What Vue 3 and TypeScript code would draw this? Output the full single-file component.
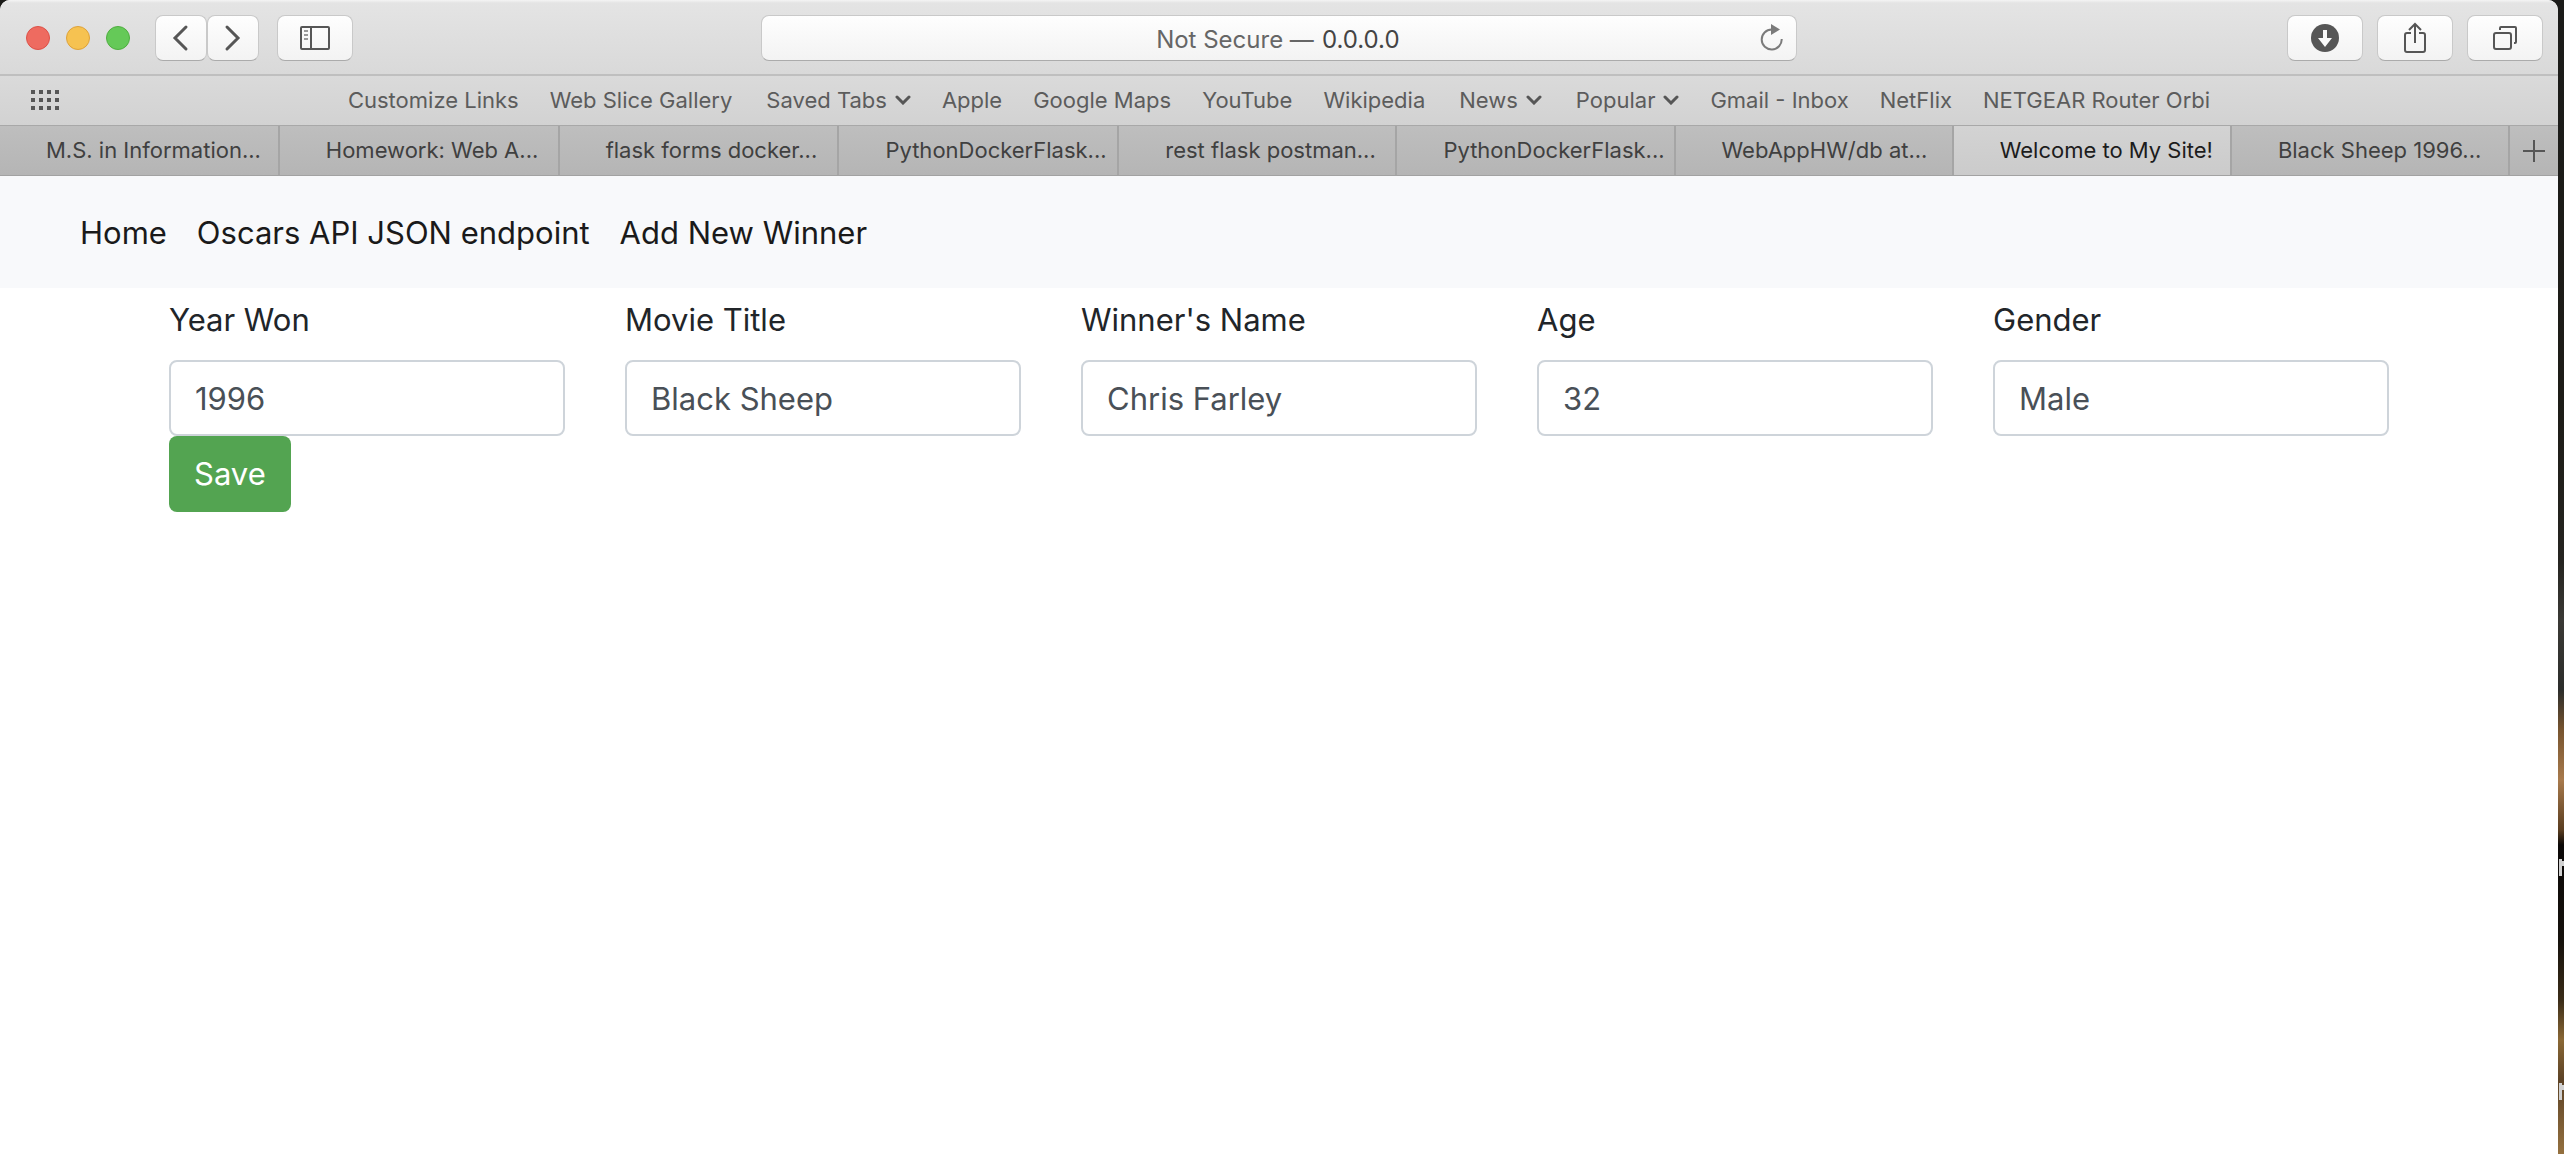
<script setup lang="ts">
import { reactive } from 'vue'

interface Bookmark {
  label: string
  menu?: boolean
}

interface Field {
  id: string
  label: string
  value: string
}

const bookmarks: Bookmark[] = [
  { label: 'Customize Links' },
  { label: 'Web Slice Gallery' },
  { label: 'Saved Tabs', menu: true },
  { label: 'Apple' },
  { label: 'Google Maps' },
  { label: 'YouTube' },
  { label: 'Wikipedia' },
  { label: 'News', menu: true },
  { label: 'Popular', menu: true },
  { label: 'Gmail - Inbox' },
  { label: 'NetFlix' },
  { label: 'NETGEAR Router Orbi' },
]

const tabs: string[] = [
  'M.S. in Information...',
  'Homework: Web A...',
  'flask forms docker...',
  'PythonDockerFlask...',
  'rest flask postman...',
  'PythonDockerFlask...',
  'WebAppHW/db at...',
  'Welcome to My Site!',
  'Black Sheep 1996...',
]
const activeTab = 7

const links: string[] = ['Home', 'Oscars API JSON endpoint', 'Add New Winner']

const fields = reactive<Field[]>([
  { id: 'year', label: 'Year Won', value: '1996' },
  { id: 'title', label: 'Movie Title', value: 'Black Sheep' },
  { id: 'name', label: "Winner's Name", value: 'Chris Farley' },
  { id: 'age', label: 'Age', value: '32' },
  { id: 'gender', label: 'Gender', value: 'Male' },
])
</script>

<template>
  <div class="desktop">
    <div class="window">
      <header class="toolbar">
        <div class="side">
          <div class="lights">
            <button class="light red" aria-label="Close"></button>
            <button class="light yellow" aria-label="Minimize"></button>
            <button class="light green" aria-label="Zoom"></button>
          </div>
          <div class="history">
            <button class="tool narrow" aria-label="Back">
              <svg width="52" height="46" viewBox="0 0 52 46"><path d="M31 12 20 23l11 11" class="arrow" /></svg>
            </button>
            <button class="tool narrow" aria-label="Forward">
              <svg width="52" height="46" viewBox="0 0 52 46"><path d="m20 12 11 11-11 11" class="arrow" /></svg>
            </button>
          </div>
          <button class="tool" aria-label="Sidebar">
            <svg width="32" height="26" viewBox="0 0 32 26" class="line">
              <rect x="2" y="2" width="28" height="22" rx="1" />
              <path d="M12 2v22" />
              <path d="M5 6h4M5 10h4M5 14h4" class="faint" />
            </svg>
          </button>
        </div>
        <div class="address">
          <label for="url">Not Secure —</label>
          <input id="url" value="0.0.0.0" />
          <button class="reload" aria-label="Reload">
            <svg width="24" height="28" viewBox="0 0 24 28">
              <path d="M21.700 15A10 10 0 1 1 11.700 5.500" fill="none" stroke="#7b7b7b" stroke-width="2" />
              <path d="M11 0v11l9-5.500z" fill="#7b7b7b" />
            </svg>
          </button>
        </div>
        <div class="side end">
          <button class="tool" aria-label="Downloads">
            <svg width="28" height="28" viewBox="0 0 28 28">
              <circle cx="14" cy="14" r="14" fill="#565656" />
              <path d="M12 6h4v8h5l-7 9-7-9h5z" fill="#fafafa" />
            </svg>
          </button>
          <button class="tool" aria-label="Share">
            <svg width="24" height="32" viewBox="0 0 24 32" class="line">
              <path d="M8 11H4a2 2 0 0 0-2 2v15a2 2 0 0 0 2 2h16a2 2 0 0 0 2-2V13a2 2 0 0 0-2-2h-4M12 21V3M6 8l6-6 6 6" />
            </svg>
          </button>
          <button class="tool" aria-label="Show all tabs">
            <svg width="26" height="26" viewBox="0 0 26 26" class="line">
              <rect x="2" y="8" width="17" height="16" rx="2" />
              <path d="M8 5V3a1 1 0 0 1 1-1h14a1 1 0 0 1 1 1v14a1 1 0 0 1-1 1h-1" />
            </svg>
          </button>
        </div>
      </header>

      <nav class="bookmarks" aria-label="Favorites">
        <button class="grid" aria-label="Top sites">
          <svg width="28" height="20" viewBox="0 0 28 20" fill="#565656">
            <path d="M0 0h4v4H0zM8 0h4v4H8zM16 0h4v4h-4zM24 0h4v4h-4zM0 8h4v4H0zM8 8h4v4H8zM16 8h4v4h-4zM24 8h4v4h-4zM0 16h4v4H0zM8 16h4v4H8zM16 16h4v4h-4zM24 16h4v4h-4z" />
          </svg>
        </button>
        <a v-for="b in bookmarks" :key="b.label" href="#" :class="{ menu: b.menu }">
          {{ b.label }}
          <svg v-if="b.menu" width="16" height="10" viewBox="0 0 16 10"><path d="m2 2 6 6 6-6" class="arrow" /></svg>
        </a>
      </nav>

      <div class="tabs">
        <button v-for="(t, i) in tabs" :key="i" class="tab" :class="{ active: i === activeTab }">{{ t }}</button>
        <button class="add" aria-label="New tab">
          <svg width="22" height="22" viewBox="0 0 22 22"><path d="M11 0v22M0 11h22" stroke="#565656" stroke-width="2" /></svg>
        </button>
      </div>

      <nav class="site-nav">
        <a v-for="l in links" :key="l" href="#">{{ l }}</a>
      </nav>

      <form class="form" @submit.prevent>
        <div class="fields">
          <div v-for="f in fields" :key="f.id" class="field">
            <label :for="f.id">{{ f.label }}</label>
            <input :id="f.id" v-model="f.value" type="text" />
          </div>
        </div>
        <button class="save" type="submit">Save</button>
      </form>
    </div>
  </div>
</template>

<style>
body {
  margin: 0;
}
</style>

<style scoped>
* {
  box-sizing: border-box;
}
button,
input {
  margin: 0;
  font: inherit;
}
button {
  padding: 0;
  border: 0;
  background: none;
  color: inherit;
}
a {
  color: inherit;
  text-decoration: none;
}
svg {
  display: block;
  flex: none;
}
.desktop {
  display: flex;
  min-height: 100vh;
  padding-right: 6px;
  font-family: Inter, 'Liberation Sans', sans-serif;
  background:
    linear-gradient(#d0d0d0, #d0d0d0) right 2px top 859px / 3px 17px no-repeat,
    linear-gradient(#d0d0d0, #d0d0d0) right 0 top 861px / 2px 5px no-repeat,
    linear-gradient(#d0d0d0, #d0d0d0) right 2px top 1083px / 3px 17px no-repeat,
    linear-gradient(#d0d0d0, #d0d0d0) right 0 top 1085px / 2px 5px no-repeat,
    linear-gradient(#1b1b19, #1d1c17 400px, #252420 560px, #3a3935 620px, #2c2d2b 690px, #77542f 730px, #a87a4c 780px, #5a3d20 830px, #0b0807 845px, #15110c 940px, #3a2c18 1000px, #8a6835 1040px, #5c4226 1080px, #94703f);
}
.window {
  flex: 1;
  min-width: 0;
  overflow: hidden;
  border-radius: 10px 10px 0 0;
  background: #fff;
}
.toolbar {
  display: flex;
  align-items: center;
  height: 76px;
  border-bottom: 2px solid #bfbfbf;
  background: linear-gradient(#f4f4f4, #e4e4e4 3px, #d9d9d9);
}
.side {
  display: flex;
  flex: 1;
  align-items: center;
  gap: 18px;
  padding: 2px 15px 0 26px;
}
.end {
  justify-content: flex-end;
  gap: 14px;
}
.lights {
  display: flex;
  gap: 16px;
  margin-right: 7px;
}
.light {
  width: 24px;
  height: 24px;
  border: 1px solid #dd5148;
  border-radius: 50%;
  background: #ee6b60;
}
.yellow {
  border-color: #dea23a;
  background: #f6c251;
}
.green {
  border-color: #4fae40;
  background: #65c958;
}
.history {
  display: flex;
}
.tool {
  display: flex;
  align-items: center;
  justify-content: center;
  width: 76px;
  height: 46px;
  border: 1px solid #c9c9c9;
  border-bottom-color: #ababab;
  border-radius: 8px;
  background: linear-gradient(#fefefe, #f3f3f3);
}
.narrow {
  width: 52px;
}
.arrow {
  fill: none;
  stroke: #565656;
  stroke-width: 3;
  stroke-linecap: round;
}
.line {
  fill: none;
  stroke: #565656;
  stroke-width: 2;
}
.faint {
  stroke: #9a9a9a;
}
.address {
  position: relative;
  display: flex;
  align-items: center;
  justify-content: center;
  gap: 8px;
  width: 1036px;
  height: 46px;
  margin-top: 2px;
  padding-top: 2px;
  border: 1px solid #c9c9c9;
  border-bottom-color: #ababab;
  border-radius: 8px;
  background: linear-gradient(#fefefe, #f3f3f3);
  color: #666;
  font-size: 24px;
}
.address input {
  width: 80px;
  padding: 0;
  border: 0;
  background: none;
  color: #444;
}
.reload {
  position: absolute;
  top: 8px;
  right: 12px;
}
.bookmarks {
  position: relative;
  display: flex;
  align-items: center;
  justify-content: center;
  gap: 31px;
  height: 49px;
  padding-bottom: 2px;
  background: linear-gradient(#dadada, #d2d2d2);
  color: #5c5c5c;
  font-size: 22px;
}
.bookmarks a {
  display: flex;
  align-items: center;
  gap: 8px;
  white-space: nowrap;
}
.bookmarks .menu {
  padding-left: 3px;
}
.grid {
  position: absolute;
  left: 31px;
}
.tabs {
  display: flex;
  height: 51px;
  border-top: 1px solid #a8a8a8;
  border-bottom: 1px solid #a2a2a2;
  background: linear-gradient(#bebebe, #b5b5b5);
  color: #404040;
  font-size: 22px;
}
.tab {
  flex: 139;
  min-width: 0;
  padding: 0 0 2px 46px;
  border-right: 2px solid #a5a5a5;
  text-align: left;
  white-space: nowrap;
}
.tab:nth-child(-n + 4) {
  flex-grow: 140;
}
.active {
  background: linear-gradient(#d3d3d3, #cbcbcb);
  color: #1c1c1c;
}
.add {
  display: flex;
  align-items: center;
  justify-content: center;
  width: 48px;
}
.site-nav {
  display: flex;
  align-items: center;
  gap: 30px;
  height: 112px;
  padding: 0 80px;
  background: #f8f9fb;
  color: #1a1a1a;
  font-size: 31px;
}
.form {
  max-width: 2280px;
  margin: 0 auto;
  padding: 8px 30px 0;
  color: #212529;
  font-size: 31px;
  line-height: 48px;
}
.fields {
  display: flex;
  gap: 60px;
}
.field {
  display: flex;
  flex: 1;
  flex-direction: column;
  gap: 16px;
  min-width: 0;
}
.field input {
  width: 100%;
  height: 76px;
  padding: 0 24px;
  border: 2px solid #ced4da;
  border-radius: 8px;
  background: #fff;
  color: #495057;
}
.save {
  display: block;
  height: 76px;
  padding: 0 25px;
  border-radius: 8px;
  background: #53a451;
  color: #fff;
}
</style>
